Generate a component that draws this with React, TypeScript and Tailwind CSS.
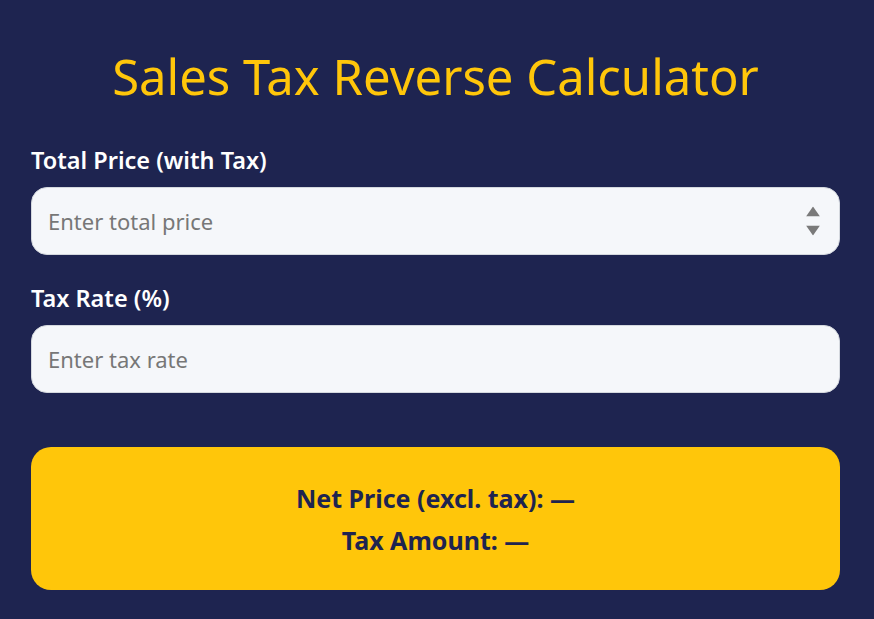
import { useState } from "react";

function Field({
  label,
  placeholder,
  spinner,
}: {
  label: string;
  placeholder: string;
  spinner?: boolean;
}) {
  const [value, setValue] = useState("");
  return (
    <div className="flex flex-col">
      <label className="text-[23.5px] font-semibold text-white leading-[30px] mb-[12px]">
        {label}
      </label>
      <div className="relative">
        <input
          type="text"
          value={value}
          onChange={(e) => setValue(e.target.value)}
          placeholder={placeholder}
          className="w-full h-[68px] rounded-[16px] border border-[#d4d8de] bg-[#f5f7fa] px-[16px] text-[22px] text-[#1e2450] placeholder:text-[#777777] outline-none"
        />
        {spinner && (
          <div className="absolute right-[20px] top-1/2 -translate-y-1/2 flex flex-col items-center gap-[9px] pointer-events-none">
            <svg width="14" height="10" viewBox="0 0 14 10">
              <path d="M7 0 L14 10 L0 10 Z" fill="#7a7a7a" />
            </svg>
            <svg width="14" height="10" viewBox="0 0 14 10">
              <path d="M0 0 L14 0 L7 10 Z" fill="#7a7a7a" />
            </svg>
          </div>
        )}
      </div>
    </div>
  );
}

export default function App() {
  return (
    <div
      className="min-h-[619px] w-full bg-[#1e2450] pl-[31px] pr-[34px] pt-[45px]"
      style={{ fontFamily: '"Noto Sans", "Open Sans", sans-serif' }}
    >
      <h1 className="text-center text-[49px] font-normal text-[#ffc60a] leading-[62px]">
        Sales Tax Reverse Calculator
      </h1>
      <div className="mt-[38px] flex flex-col gap-[28px]">
        <Field label="Total Price (with Tax)" placeholder="Enter total price" spinner />
        <Field label="Tax Rate (%)" placeholder="Enter tax rate" />
      </div>
      <div className="mt-[54px] h-[143px] rounded-[20px] bg-[#ffc60a] flex flex-col items-center justify-center gap-[6px] text-[#1e2450] text-[25px] font-bold leading-[36px]">
        <p>Net Price (excl. tax): —</p>
        <p>Tax Amount: —</p>
      </div>
    </div>
  );
}
